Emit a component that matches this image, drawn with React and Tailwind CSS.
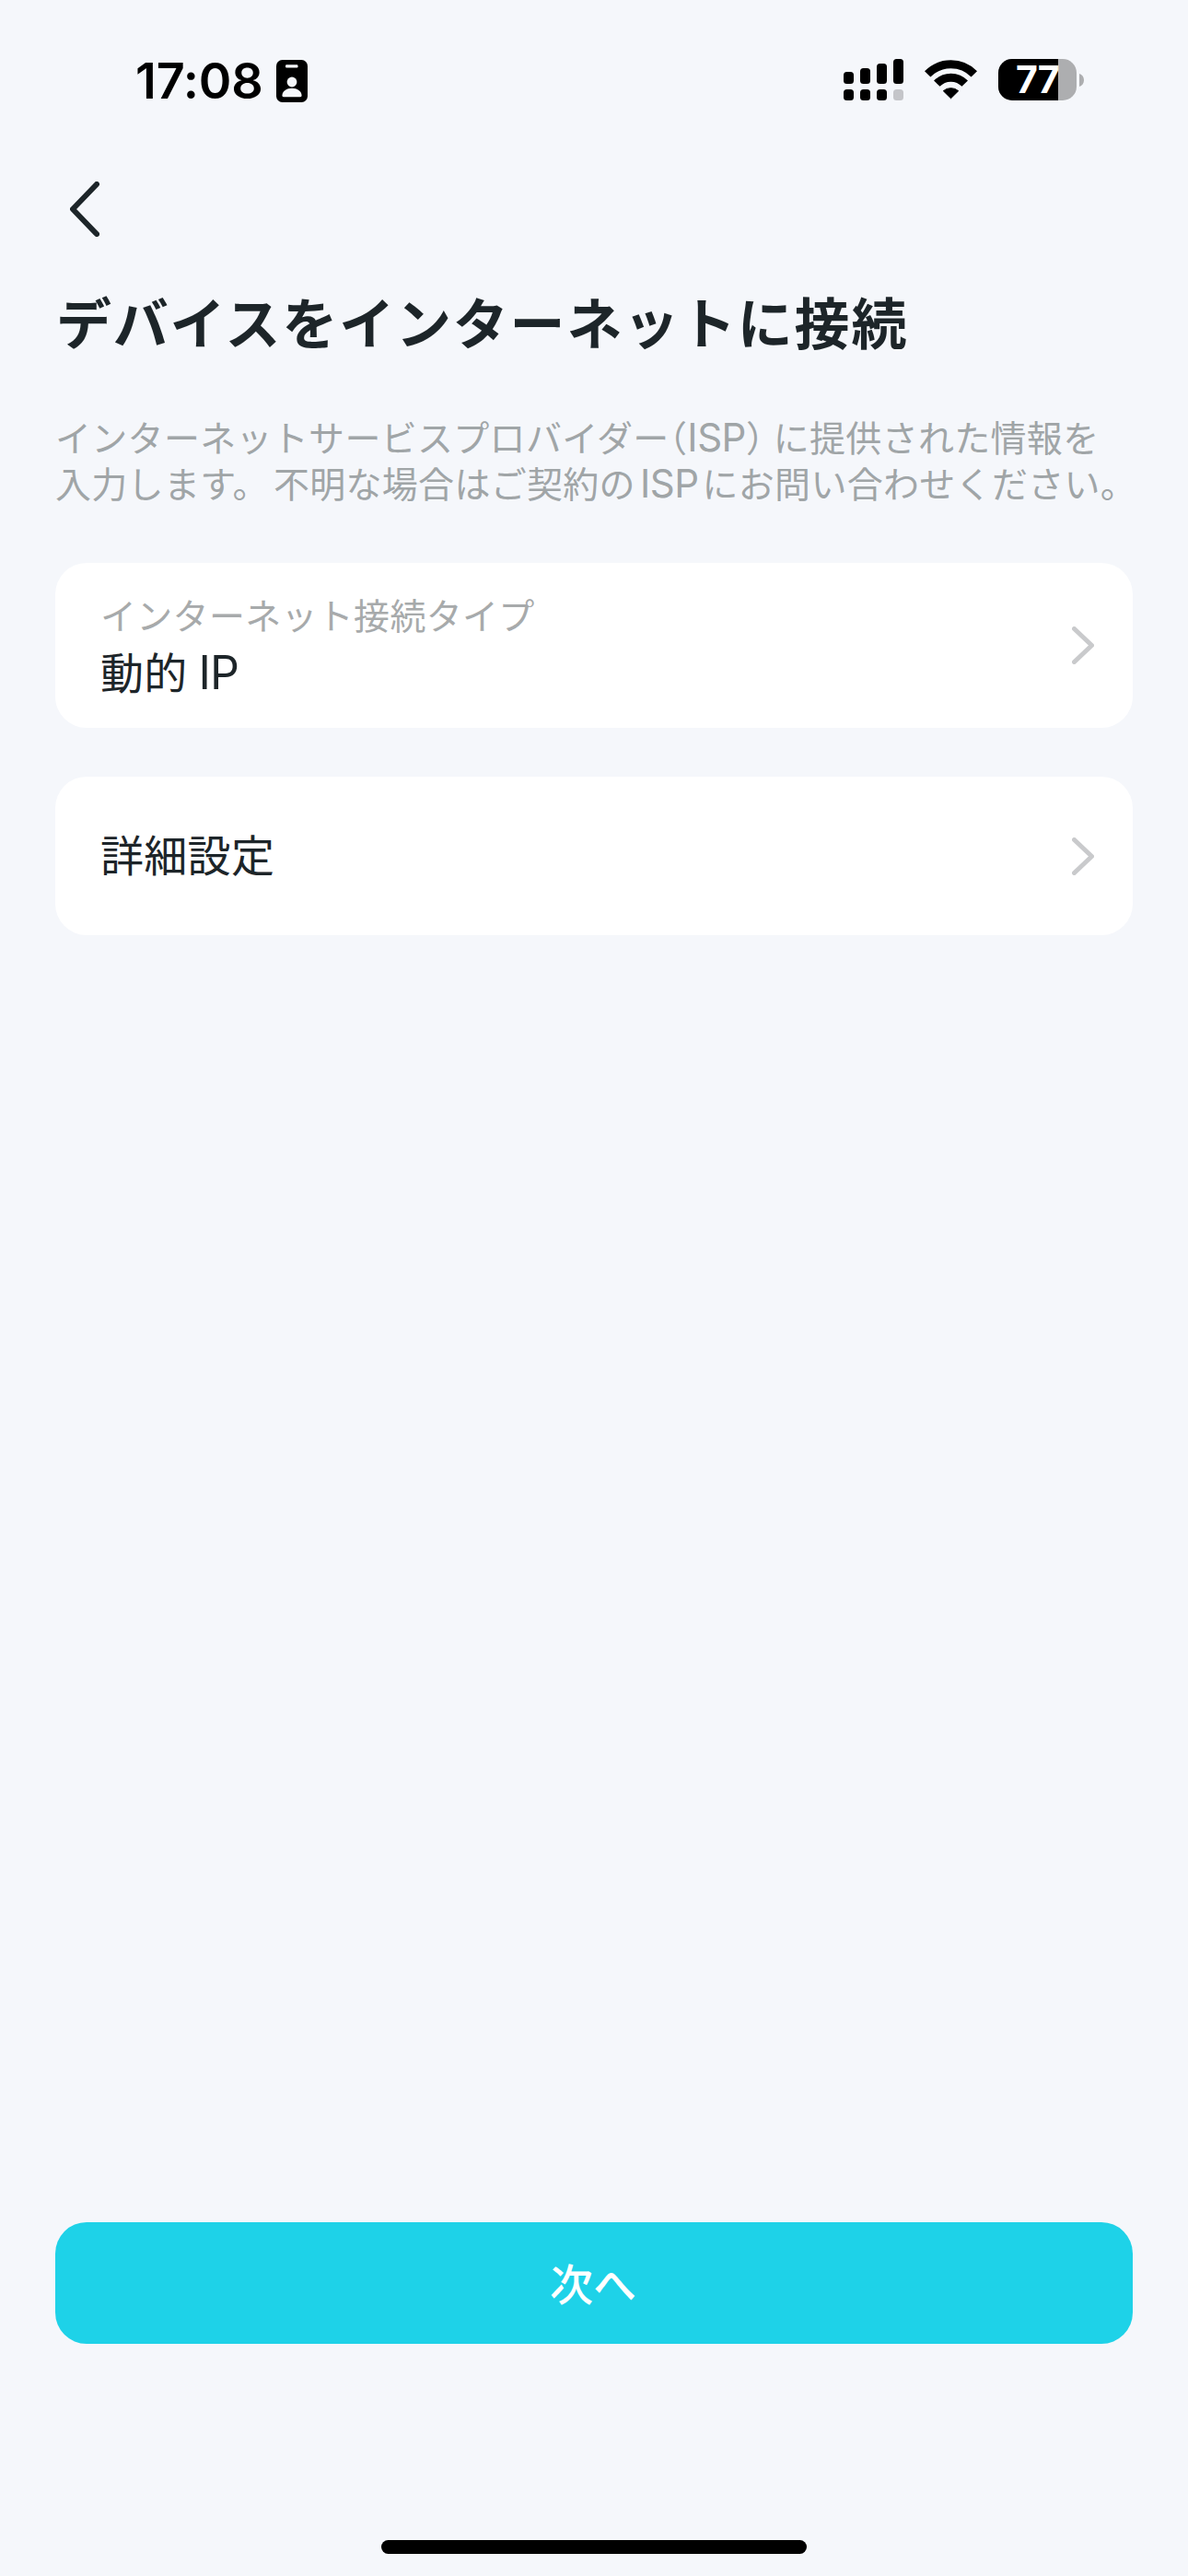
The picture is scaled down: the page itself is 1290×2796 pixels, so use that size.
const settings = [
  { id: 'type', label: 'インターネット接続タイプ', value: '動的', latin: 'IP', height: 'h-[179px]' },
  { id: 'advanced', value: '詳細設定', height: 'h-[172px]' },
];

function BadgeIcon() {
  return (
    <svg className="w-[34px] h-[46px]" viewBox="0 0 34 46">
      <rect width="34" height="46" rx="6.5" />
      <rect x="10" y="5.2" width="13.5" height="3.2" rx="1.2" fill="#f5f7fb" />
      <circle cx="17" cy="24" r="5.4" fill="#f5f7fb" />
      <path d="M6.4 38.5C6.8 34 11 30.8 17 30.8s10.2 3.2 10.6 7.7c0 1-.6 1.7-1.6 1.7H8c-1 0-1.6-.7-1.6-1.7z" fill="#f5f7fb" />
    </svg>
  );
}

// dual SIM: bars on top, second line as dots below
function SignalIcon() {
  return (
    <svg className="w-[65px] h-[45px]" viewBox="0 0 65 45">
      <rect x="0" y="14" width="11" height="13" rx="3.5" />
      <rect x="18" y="10" width="11" height="17" rx="3.5" />
      <rect x="36" y="5" width="11" height="22" rx="3.5" />
      <rect x="54" y="0" width="11" height="27" rx="3.5" />
      <rect x="0" y="33" width="11" height="12" rx="3.5" />
      <rect x="18" y="33" width="11" height="12" rx="3.5" />
      <rect x="36" y="33" width="11" height="12" rx="3.5" />
      <rect x="54" y="33" width="11" height="12" rx="3.5" fill="#c4c5c9" />
    </svg>
  );
}

function WifiIcon() {
  return (
    <svg className="w-[57px] h-[43px]" viewBox="0 0 57 43">
      <g fill="none" stroke="#000" strokeWidth="9">
        <path d="M3.2 15.4A35.5 35.5 0 0 1 53.8 15.4" />
        <path d="M13.3 25.7A21 21 0 0 1 43.7 25.7" />
      </g>
      <path d="M20.3 33.7A12.5 12.5 0 0 1 36.7 33.7L28.5 41.8Z" stroke="#000" strokeWidth="1" strokeLinejoin="round" />
    </svg>
  );
}

function Battery() {
  return (
    <div className="flex items-center gap-[3px]">
      <div className="relative w-[85px] h-[45px] rounded-[15px] bg-[#adaeb0]">
        <div className="w-[65px] h-full rounded-l-[15px] bg-black" />
        <span className="absolute left-[19px] top-0 leading-[45px] text-[41px] font-bold tracking-[-1px] text-white">77</span>
      </div>
      <svg className="w-[5px] h-[14px]" viewBox="0 0 5 14">
        <path d="M0 0C3 1 5 3.5 5 7s-2 6-5 7z" fill="#adaeb0" />
      </svg>
    </div>
  );
}

function ChevronRight() {
  return (
    <svg className="w-6 h-[41px] shrink-0" viewBox="0 0 24 41" fill="none" stroke="#c9cacc" strokeWidth="5" strokeLinecap="round" strokeLinejoin="round">
      <path d="M2.5 2.5L21.5 20.5L2.5 38.5" />
    </svg>
  );
}

export default function App() {
  return (
    <div className="w-[1290px] h-[2796px] flex flex-col overflow-hidden bg-[#f5f7fb] text-[#1d2529] font-['Noto_Sans_CJK_JP',sans-serif]">
      {/* STATUS BAR */}
      <div className="flex items-center justify-between h-[173px] pl-[147px] pr-[113px] font-['Inter',sans-serif] text-black shrink-0">
        <div className="flex items-center gap-[14px] pt-[3px]">
          <span className="text-[54px] font-semibold leading-none tracking-[-0.2px]">17:08</span>
          <BadgeIcon />
        </div>
        <div className="flex items-center gap-[23px]">
          <SignalIcon />
          <WifiIcon />
          <Battery />
        </div>
      </div>

      <main className="flex-1 flex flex-col px-[60px]">
        <button className="w-[60px] h-[60px] mt-6 pl-4 shrink-0" aria-label="戻る">
          <svg className="w-8 h-[60px]" viewBox="0 0 32 60" fill="none" stroke="currentColor" strokeWidth="6" strokeLinecap="round" strokeLinejoin="round">
            <path d="M29 3L3 30L29 57" />
          </svg>
        </button>

        <h1 className="mt-[46px] pl-px text-[60px] leading-[90px] font-bold tracking-[1.8px] whitespace-nowrap">デバイスをインターネットに接続</h1>

        <p className="mt-[55px] h-[100px] text-[39px] leading-[50px] tracking-[0.3px] text-[#a0a5a7] whitespace-nowrap">
          インターネットサービスプロバイダー<span className="[font-feature-settings:'halt']">（</span>
          <span className="font-['Inter'] leading-none text-[42px] tracking-[-0.5px]">ISP</span>
          <span className="mr-[10px] [font-feature-settings:'halt']">）</span>に提供された情報を
          <br />
          入力します<span className="mr-[5px]">。</span>不明な場合はご契約の
          <span className="font-['Inter'] leading-none text-[42px] ml-[5px] mr-[4px] tracking-[-0.5px]">ISP</span>にお問い合わせください。
        </p>

        {/* SETTINGS */}
        <div className="mt-[63px] flex flex-col gap-[53px]">
          {settings.map(item => (
            <div key={item.id} className={`flex items-center justify-between rounded-[34px] bg-white pl-[49px] pr-[42px] ${item.height}`}>
              <div className="pb-[6px]">
                {item.label && <p className="h-[60px] text-[39px] leading-[60px] tracking-[0.3px] text-[#a7aaab]">{item.label}</p>}
                <p className="h-[64px] text-[47px] leading-[64px] tracking-[0.3px]">
                  {item.value}
                  {item.latin && <span className="font-['Inter'] leading-none text-[50px] ml-[12px] tracking-[-1px]">{item.latin}</span>}
                </p>
              </div>
              <ChevronRight />
            </div>
          ))}
        </div>

        <button className="mt-auto mb-[213px] pb-[2px] pr-[2px] h-[132px] shrink-0 rounded-[34px] bg-[#1ed2e8] text-[47px] font-medium text-white">次へ</button>
      </main>

      {/* HOME INDICATOR */}
      <div className="w-[462px] h-[15px] mb-6 mx-auto rounded-full bg-black shrink-0" />
    </div>
  );
}
